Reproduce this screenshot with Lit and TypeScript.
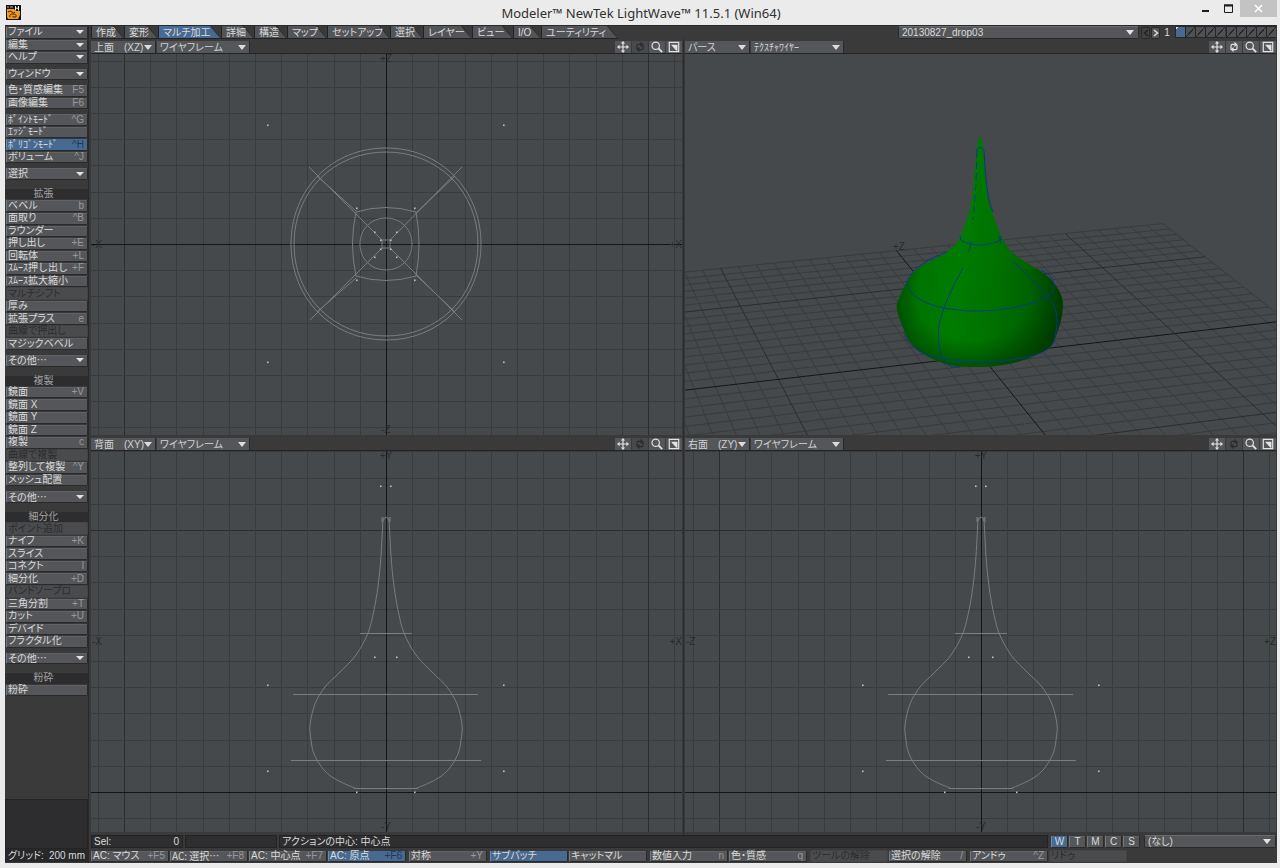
import { LitElement, html, svg, css, nothing } from "lit";
import { customElement, property } from "lit/decorators.js";
import { classMap } from "lit/directives/class-map.js";
import { styleMap } from "lit/directives/style-map.js";

type Pt = [number, number];

interface Tool {
  label: string;
  key?: string;
  menu?: boolean;
  active?: boolean;
  off?: boolean;
}

interface Section {
  title?: string;
  groups: Tool[][];
}

const t = (label: string, key?: string): Tool => ({ label, key });
const menu = (label: string): Tool => ({ label, menu: true });
const off = (label: string): Tool => ({ label, off: true });

const SECTIONS: Section[] = [
  {
    groups: [
      [menu("ファイル"), menu("編集"), menu("ヘルプ")],
      [menu("ウィンドウ")],
      [t("色・質感編集", "F5"), t("画像編集", "F6")],
      [
        t("ﾎﾟｲﾝﾄﾓｰﾄﾞ", "^G"),
        t("ｴｯｼﾞﾓｰﾄﾞ"),
        { label: "ﾎﾟﾘｺﾞﾝﾓｰﾄﾞ", key: "^H", active: true },
        t("ボリューム", "^J"),
      ],
      [menu("選択")],
    ],
  },
  {
    title: "拡張",
    groups: [
      [
        t("ベベル", "b"),
        t("面取り", "^B"),
        t("ラウンダー"),
        t("押し出し", "+E"),
        t("回転体", "+L"),
        t("ｽﾑｰｽ押し出し", "+F"),
        t("ｽﾑｰｽ拡大縮小"),
        off("マルチシフト"),
        t("厚み"),
        t("拡張プラス", "e"),
        off("曲線で押出し"),
        t("マジックベベル"),
      ],
      [menu("その他…")],
    ],
  },
  {
    title: "複製",
    groups: [
      [
        t("鏡面", "+V"),
        t("鏡面 X"),
        t("鏡面 Y"),
        t("鏡面 Z"),
        t("複製", "c"),
        off("曲線で複製"),
        t("整列して複製", "^Y"),
        t("メッシュ配置"),
      ],
      [menu("その他…")],
    ],
  },
  {
    title: "細分化",
    groups: [
      [
        off("ポイント追加"),
        t("ナイフ", "+K"),
        t("スライス"),
        t("コネクト", "l"),
        t("細分化", "+D"),
        off("バンドソープロ"),
        t("三角分割", "+T"),
        t("カット", "+U"),
        t("デバイド"),
        t("フラクタル化"),
      ],
      [menu("その他…")],
    ],
  },
  { title: "粉砕", groups: [[t("粉砕")]] },
];

const TABS: { label: string; width: number; active?: boolean }[] = [
  { label: "作成", width: 33 },
  { label: "変形", width: 34 },
  { label: "マルチ加工", width: 63, active: true },
  { label: "詳細", width: 33 },
  { label: "構造", width: 33 },
  { label: "マップ", width: 40 },
  { label: "セットアップ", width: 63 },
  { label: "選択", width: 33 },
  { label: "レイヤー", width: 49 },
  { label: "ビュー", width: 41 },
  { label: "I/O", width: 28 },
  { label: "ユーティリティ", width: 77 },
];

const ACTIONS: Tool[][] = [
  [
    t("AC: マウス", "+F5"),
    t("AC: 選択…", "+F8"),
    t("AC: 中心点", "+F7"),
    { label: "AC: 原点", key: "+F6", active: true },
  ],
  [t("対称", "+Y")],
  [{ label: "サブパッチ", active: true }, t("キャットマル")],
  [t("数値入力", "n"), t("色・質感", "q")],
  [off("ツールの解除"), t("選択の解除", "/")],
  [t("アンドゥ", "^Z"), off("リドゥ")],
];

const smooth = (pts: Pt[], closed = false): string => {
  const n = pts.length;
  const at = (i: number): Pt =>
    closed ? pts[(i + n) % n] : pts[Math.max(0, Math.min(n - 1, i))];
  let d = `M${pts[0][0]} ${pts[0][1]}`;
  const last = closed ? n : n - 1;
  for (let i = 0; i < last; i++) {
    const [a, b, c, e] = [at(i - 1), at(i), at(i + 1), at(i + 2)];
    const f = (v: number) => v.toFixed(1);
    d += `C${f(b[0] + (c[0] - a[0]) / 6)} ${f(b[1] + (c[1] - a[1]) / 6)} ${f(
      c[0] - (e[0] - b[0]) / 6
    )} ${f(c[1] - (e[1] - b[1]) / 6)} ${c[0]} ${c[1]}`;
  }
  return closed ? d + "Z" : d;
};

const drawStyles = css`
  :host {
    display: block;
    min-height: 0;
    overflow: hidden;
    background: #45494b;
  }
  svg {
    display: block;
    width: 100%;
    height: 100%;
  }
  text {
    font: 10px "Liberation Sans", sans-serif;
    fill: #27292a;
  }
  .minor {
    stroke: #393b3c;
  }
  .major {
    stroke: #2b2c2d;
  }
  .axis {
    stroke: #151516;
  }
  .wire {
    fill: none;
    stroke: #7b7c7c;
    stroke-width: 1;
  }
  .point {
    fill: #c0c0c0;
  }
`;

@customElement("ortho-view")
class OrthoView extends LitElement {
  @property() kind: "top" | "back" | "right" = "top";

  static styles = drawStyles;

  private grid(cx: number, cy: number) {
    const step = 26.2;
    const lines = [];
    for (let i = -40; i <= 80; i++) {
      if (i === 0) continue;
      const cls = i % 10 === 0 ? "major" : "minor";
      const x = Math.round(cx + i * step) + 0.5;
      const y = Math.round(cy + i * step) + 0.5;
      lines.push(svg`<path class=${cls} d="M${x} 0V3000M0 ${y}H4000" />`);
    }
    return svg`${lines}
      <path class="axis" d="M${cx + 0.5} 0V3000M0 ${cy + 0.5}H4000" />`;
  }

  private points(list: Pt[]) {
    return list.map(
      ([x, y]) => svg`<rect class="point" x=${x - 1} y=${y - 0.5} width="1.600" height="1.600" />`
    );
  }

  private mirror(list: Pt[]): Pt[] {
    return list.flatMap(([x, y]): Pt[] => [[-x, y], [x, y]]);
  }

  private topShape() {
    const round = (rx: number, ry: number) => {
      const kx = rx * 0.57;
      const ky = ry * 0.57;
      return `M0 ${-ry}C${kx} ${-ry} ${rx} ${-ky} ${rx} 0S${kx} ${ry} 0 ${ry}S${-rx} ${ky} ${-rx} 0S${-kx} ${-ry} 0 ${-ry}`;
    };
    const dots: Pt[] = [
      [118, -119], [118, 118], [29, -36], [29, 36],
      [11, -12], [11, 13], [5, -4], [5, 5],
    ];
    return svg`
      <path class="wire" d=${round(95, 96)} />
      <path class="wire" d=${round(92, 92)} />
      <path class="wire" d=${round(26, 26)} />
      <path class="wire" d="M-30 -32Q0 -41 30 -32Q36 0 30 32Q0 41 -30 32Q-37 0 -30 -32Z" />
      <path class="wire" d="M-4 -4H4V4H-4Z" />
      <path class="wire" d="M-77 -77L-4 -4M76 -77L4 -4M-76 76L-4 4M76 76L4 4" />
      <path class="wire" d="M-69 -68L-30 -33M69 -68L30 -31M-69 68L-30 34M69 68L30 31" />
      ${this.points(this.mirror(dots))}`;
  }

  private sideShape(base: number, neck: number) {
    const side: Pt[] = [
      [3, -275], [5, -236], [8, -206], [12, -182], [18, -159], [30, -137],
      [47, -119], [61, -105], [71, -88], [76, -67], [75, -52], [73, -41],
      [69, -32], [62, -22], [54, -15], [43, -9], [31, -4],
    ];
    const dots: Pt[] = [
      [5, -306], [neck, -135], [118, -107], [118, -21], [base, 0],
    ];
    return svg`
      <path class="wire" d=${smooth(side)} />
      <path class="wire" d=${smooth(side.map(([x, y]): Pt => [-x, y]))} />
      <path class="wire" d="M-3 -271Q0 -279 3 -271M-4 -275V-270M4 -275V-270" />
      <path class="wire" d="M-26 -158.5H26M-93 -97.5H92M-95 -31.5H95M-32 -3.5H32" />
      ${this.points(this.mirror(dots))}`;
  }

  render() {
    const top = this.kind === "top";
    const cx = this.kind === "right" ? 296 : 295;
    const cy = top ? 190 : 341;
    const across = this.kind === "right" ? ["-Z", "+Z"] : ["-X", "+X"];
    const up = top ? "Z" : "Y";
    return html`<svg role="img" aria-label="viewport">
      <g shape-rendering="crispEdges">${this.grid(cx, cy)}</g>
      <text x="1" y="194">${across[0]}</text>
      <text x="100%" y="194" text-anchor="end">${across[1]}</text>
      <text x=${cx} y="8" text-anchor="middle">+${up}</text>
      <text x=${cx} y="100%" dy="-2" text-anchor="middle">-${up}</text>
      <g transform="translate(${cx} ${cy})">
        ${top
          ? this.topShape()
          : this.kind === "right"
            ? this.sideShape(36, 12)
            : this.sideShape(29, 11)}
      </g>
    </svg>`;
  }
}

const OUTLINE: Pt[] = [
  [295, 83], [298, 91], [300, 116], [304, 146], [315, 179], [328, 199],
  [357, 218], [369, 229], [377, 244], [377, 261], [372, 279], [365, 293],
  [342, 305], [318, 311], [295, 313], [265, 311], [240, 301], [225, 288],
  [217, 271], [212, 256], [213, 247], [222, 228], [235, 213], [262, 198],
  [275, 183], [285, 154], [288, 133], [292, 96], [293, 86],
];

const EDGES: Pt[][] = [
  [[275, 182], [277, 187], [286, 190], [296, 191], [308, 189], [315, 186], [316, 182]],
  [[262, 198], [244, 206], [229, 217], [222, 229], [227, 239], [240, 248], [259, 254], [288, 257], [320, 255], [347, 249], [364, 241], [369, 233], [366, 223], [356, 216]],
  [[219, 279], [223, 287], [236, 298], [255, 304], [295, 308], [325, 306], [350, 301], [365, 293], [370, 283], [372, 266], [369, 252], [363, 243], [342, 221], [327, 207]],
  [[278, 214], [267, 235], [259, 254], [254, 272], [254, 290], [257, 303], [265, 312], [275, 313]],
  [[292, 97], [293, 94], [297, 94], [299, 97]],
  [[299, 97], [301, 124], [304, 146], [308, 158]],
  [[314, 182], [316, 190]],
  [[286, 187], [285, 194], [283, 198]],
];

@customElement("perspective-view")
class PerspectiveView extends LitElement {
  static styles = [
    drawStyles,
    css`
      .edge {
        fill: none;
        stroke: #06388a;
        stroke-width: 1;
      }
      .dashed {
        stroke-dasharray: 7 4;
      }
    `,
  ];

  private project(x: number, z: number): string {
    const w = 1 + 0.00245 * x + 0.01017 * z;
    const px = (22.21 * x + 3.81 * z + 981.4) / w - 685;
    const py = (-1.416 * x - 4.03 * z + 355.9) / w - 54;
    return `${px.toFixed(1)} ${py.toFixed(1)}`;
  }

  private floor() {
    const size = 16;
    const lines = [];
    for (const main of [false, true]) {
      for (let i = -size; i <= size; i++) {
        if ((i % 10 === 0) !== main) continue;
        const cls = i === 0 ? "axis" : main ? "major" : "minor";
        lines.push(svg`<path class=${cls}
          d="M${this.project(i, -size)}L${this.project(i, size)}M${this.project(-size, i)}L${this.project(size, i)}" />`);
      }
    }
    return lines;
  }

  render() {
    const body = smooth(OUTLINE, true);
    return html`<svg role="img" aria-label="perspective viewport">
      <defs>
        <linearGradient id="side" gradientUnits="userSpaceOnUse" x1="212" y1="235" x2="378" y2="250">
          <stop offset="0" stop-color="#006200" />
          <stop offset=".14" stop-color="#007400" />
          <stop offset=".35" stop-color="#007c00" />
          <stop offset=".6" stop-color="#007000" />
          <stop offset=".85" stop-color="#005e00" />
          <stop offset="1" stop-color="#004a00" />
        </linearGradient>
        <radialGradient id="low" gradientUnits="userSpaceOnUse" cx="288" cy="240" r="92" gradientTransform="translate(0 46) scale(1 .81)">
          <stop offset=".62" stop-color="#002800" stop-opacity="0" />
          <stop offset="1" stop-color="#002800" stop-opacity=".5" />
        </radialGradient>
        <clipPath id="lower"><path d="M200 215H390V320H200Z" /></clipPath>
      </defs>
      ${this.floor()}
      <text x="208" y="196">+Z</text>
      <path d=${body} fill="url(#side)" />
      <path d=${body} fill="url(#low)" clip-path="url(#lower)" />
      ${EDGES.map((e) => svg`<path class="edge" d=${smooth(e)} />`)}
      <path class="edge dashed" d="M292 97L291 130L288 166" />
    </svg>`;
  }
}

const ICONS = {
  move: svg`<path d="M7 0L9.500 3H7.700V6.300H11V4.500L14 7L11 9.500V7.700H7.700V11H9.500L7 14L4.500 11H6.300V7.700H3V9.500L0 7L3 4.500V6.300H6.300V3H4.500Z" fill="currentColor" stroke="none" />`,
  spin: svg`<path d="M3.500 10V5.500Q3.500 4 5 4H8M10.500 4.500V8.500Q10.500 10 9 10H6" /><path d="M7.500 1L11 4L7.500 7ZM6.500 7L3 10L6.500 13Z" fill="currentColor" stroke="none" />`,
  zoom: svg`<circle cx="5.500" cy="5.500" r="4.300" /><path d="M8.700 8.700L13 13" stroke-width="2.200" />`,
  full: svg`<path d="M1.500 1.700H12.500V12.500H1.500Z" /><path d="M3.500 4.500H11V11.500H9.800Z" fill="currentColor" stroke="none" />`,
};

@customElement("view-pane")
class ViewPane extends LitElement {
  @property() view = "";
  @property() mode = "";
  @property({ type: Boolean }) rotates = false;

  static styles = css`
    :host {
      display: grid;
      grid-template-rows: 13px minmax(0, 1fr);
      min-width: 0;
      min-height: 0;
    }
    .bar {
      display: flex;
      gap: 1px;
      background: #3a3a3b;
      border-bottom: 1px solid #242425;
      box-sizing: border-box;
    }
    .pick {
      display: grid;
      align-items: center;
      width: 92px;
      background: #545659;
      border-right: 1px solid #28282a;
    }
    .pick.view {
      width: 64px;
    }
    .pick select,
    .pick i {
      grid-area: 1 / 1;
    }
    .pick i {
      justify-self: end;
      margin-right: 3px;
      border: 4px solid transparent;
      border-top: 5px solid #dcdcdc;
      border-bottom: 0;
      pointer-events: none;
    }
    select {
      appearance: none;
      width: 100%;
      height: 12px;
      padding: 1px 0 0 3px;
      border: 0;
      background: none;
      color: #d2d2d2;
      font: 10px/12px "Liberation Sans", "Noto Sans CJK JP", sans-serif;
      font-feature-settings: "palt";
    }
    select.half {
      font-feature-settings: normal;
    }
    .space {
      flex: 1;
    }
    button {
      display: grid;
      place-items: center;
      width: 16px;
      padding: 0;
      border: 0;
      background: #545659;
      color: #e2e2e2;
    }
    button:disabled {
      background: #48494b;
      color: #2b2b2c;
    }
    svg {
      width: 12px;
      height: 12px;
      fill: none;
      stroke: currentColor;
      stroke-width: 1.4;
    }
  `;

  private icon(name: keyof typeof ICONS, disabled = false) {
    return html`<button aria-label=${name} ?disabled=${disabled}>
      <svg viewBox="0 0 14 14">${ICONS[name]}</svg>
    </button>`;
  }

  render() {
    const half = /[\uff61-\uff9f]/.test(this.mode);
    return html`<div class="bar">
        <span class="pick view">
          <select aria-label="view"><option>${this.view}</option></select><i></i>
        </span>
        <span class="pick">
          <select class=${classMap({ half })} aria-label="render mode"><option>${this.mode}</option></select><i></i>
        </span>
        <span class="space"></span>
        ${this.icon("move")} ${this.icon("spin", !this.rotates)}
        ${this.icon("zoom")} ${this.icon("full")}
      </div>
      <slot></slot>`;
  }
}

@customElement("app-root")
class AppRoot extends LitElement {
  static styles = css`
    :host {
      display: grid;
      grid-template-rows: 25px minmax(0, 1fr);
      box-sizing: border-box;
      height: 100vh;
      min-height: 640px;
      padding: 0 3px 5px 5px;
      background: #ebebeb;
      color: #dadada;
      font: 10px/12px "Liberation Sans", "Noto Sans CJK JP", sans-serif;
      font-feature-settings: "palt";
    }
    * {
      box-sizing: border-box;
    }
    button,
    select {
      font: inherit;
      font-feature-settings: inherit;
      color: inherit;
      margin: 0;
    }
    .title {
      display: grid;
      grid-template-columns: 90px 1fr 90px;
      align-items: center;
    }
    .title h1 {
      margin: 0;
      text-align: center;
      color: #303030;
      font: 13px/24px "Noto Sans", sans-serif;
    }
    .logo {
      width: 15px;
      height: 15px;
      margin-left: 1px;
    }
    .window {
      display: flex;
      align-self: start;
      justify-content: flex-end;
      height: 17px;
    }
    .window button {
      width: 23px;
      padding: 0;
      border: 0;
      background: none;
    }
    .window .close {
      width: 37px;
      background: #c3c3c3;
    }
    .window svg {
      display: block;
      margin: auto;
      width: 11px;
      height: 11px;
      fill: none;
      stroke: #1c1c1c;
      stroke-width: 2;
    }
    .window .close svg {
      stroke: #fff;
    }
    .frame {
      display: grid;
      grid-template-columns: 84px minmax(0, 1fr);
      gap: 2px;
      min-height: 0;
      padding-right: 1px;
      background: #3a3a3b;
      border-top: 1px solid #2a2a2b;
    }
    .side {
      display: flex;
      flex-direction: column;
      min-height: 0;
      border-right: 1px solid #29292a;
      padding-bottom: 1px;
    }
    .tools {
      flex: 1;
      display: flex;
      flex-direction: column;
      min-height: 0;
      padding: 0 0 0 1px;
    }
    .tools > * {
      flex: 1055 1 2px;
      min-height: 0;
    }
    .tools > .gap {
      flex-grow: 200;
    }
    .tools > .wide {
      flex-grow: 700;
    }
    .tools > h2 {
      flex-grow: 840;
      margin: 0 0 0 -1px;
      background: #2d2d2f;
      color: #a3a3a3;
      font: inherit;
      line-height: 10px;
      text-align: center;
      padding-right: 6px;
    }
    .tools > .rest {
      flex-grow: 10100;
    }
    .tools > .well {
      flex-grow: 4750;
      background: #2d2d2f;
      border: 1px solid #242425;
      margin-left: -1px;
    }
    .tool {
      display: flex;
      align-items: center;
      justify-content: space-between;
      padding: 0 3px 0 1px;
      border: 1px solid #2a2a2b;
      border-top-color: #38383a;
      border-left-color: #77787a;
      border-radius: 2px;
      background: linear-gradient(#616265 1px, #545659 1px);
      line-height: 10px;
      white-space: nowrap;
      text-align: left;
    }
    .tool .half {
      font-feature-settings: normal;
    }
    .tool .dots {
      font-family: "Noto Sans CJK JP", sans-serif;
    }
    .tool .key {
      color: #98999b;
    }
    .tool.active {
      background: #476a92;
      border-left-color: #6d8bae;
    }
    .tool.active .key {
      color: #1f3857;
    }
    .tool:disabled {
      background: #4a4b4d;
      border-color: #434446;
      color: #2c2c2e;
    }
    .tool.menu::after,
    .drop i {
      content: "";
      border: 4px solid transparent;
      border-top: 4px solid #e4e4e4;
      border-bottom: 0;
    }
    .grid-size {
      display: flex;
      justify-content: space-between;
      height: 13px;
      padding: 1px 3px 0;
      background: #28282a;
    }
    .main {
      display: grid;
      grid-template-rows: 13px minmax(0, 1fr) 14px 13px;
      min-width: 0;
      min-height: 0;
      padding-bottom: 1px;
    }
    .top {
      display: flex;
    }
    .tabs {
      display: flex;
    }
    .tab {
      flex: none;
      padding: 0 0 0 5px;
      border: 0;
      background: #232324;
      clip-path: polygon(0 0, calc(100% - 10px) 0, 100% 100%, 0 100%);
      text-align: left;
      line-height: 11px;
      position: relative;
      isolation: isolate;
      white-space: nowrap;
    }
    .tab::before {
      content: "";
      position: absolute;
      inset: 0 1px 1px 1px;
      z-index: -1;
      background: #525457;
      clip-path: polygon(0 0, calc(100% - 10px) 0, 100% 100%, 0 100%);
    }
    .tab.active::before {
      background: #476a92;
    }
    .space {
      flex: 1;
    }
    .drop {
      display: grid;
      align-items: center;
      border: 1px solid #2a2a2b;
      border-top-color: #6a6b6d;
      border-radius: 2px;
      background: #545659;
    }
    .drop select,
    .drop i {
      grid-area: 1 / 1;
    }
    .drop select {
      appearance: none;
      width: 100%;
      height: 11px;
      padding: 0 3px;
      border: 0;
      background: none;
      line-height: 11px;
    }
    .drop i {
      justify-self: end;
      margin-right: 4px;
      border-top-width: 5px;
      pointer-events: none;
    }
    .object {
      width: 241px;
    }
    .bank {
      display: flex;
      align-items: center;
      gap: 1px;
      padding: 0 4px 0 2px;
    }
    .bank button {
      display: grid;
      place-items: center;
      width: 9px;
      height: 12px;
      padding: 0;
      border: 1px solid #2a2a2b;
      border-radius: 2px;
      background: #545659;
    }
    .bank button:disabled {
      background: #424244;
      color: #222;
    }
    .bank svg {
      width: 6px;
      height: 8px;
      fill: none;
      stroke: currentColor;
      stroke-width: 1.6;
    }
    .bank b {
      width: 8px;
      margin-left: 2px;
      font-weight: normal;
      text-align: center;
    }
    .layers {
      display: flex;
    }
    .layer {
      width: 10px;
      height: 12px;
      padding: 0;
      border: 1px solid #262627;
      border-width: 1px 0 1px 1px;
      background: linear-gradient(to bottom right, #4f5154 46%, #262627 46%, #262627 54%, #4f5154 54%);
    }
    .layer.split {
      margin-left: 1px;
    }
    .layer.active {
      background: linear-gradient(135deg, #dfe6ee 2px, #476a92 2px);
    }
    .views {
      display: grid;
      grid-template: minmax(0, 1fr) minmax(0, 1fr) / minmax(0, 1fr) minmax(0, 1fr);
      gap: 3px;
      padding: 2px 0 3px;
      background: linear-gradient(#2a2a2b, #2a2a2b) center / 1px 100% no-repeat #3a3a3b;
    }
    .status {
      display: flex;
      gap: 2px;
      padding-bottom: 1px;
    }
    .cell {
      display: flex;
      justify-content: space-between;
      width: 92px;
      padding: 0 3px 0 2px;
      background: #2e2e30;
      border: 1px solid #232324;
      line-height: 11px;
    }
    .cell.message {
      flex: 1;
    }
    .maps {
      display: flex;
      gap: 1px;
      padding: 0 2px 0 1px;
    }
    .maps .tool {
      justify-content: center;
      width: 17px;
      padding: 0;
    }
    .weights {
      width: 132px;
    }
    .actions {
      display: flex;
      gap: 3px;
      padding-top: 1px;
    }
    .actions div {
      display: flex;
      gap: 1px;
    }
    .actions .tool {
      width: 78px;
    }
  `;

  private tool(item: Tool) {
    const half = /[\uff61-\uff9f]/.test(item.label);
    const dots = item.label.endsWith("…");
    return html`<button
      class=${classMap({ tool: true, menu: !!item.menu, active: !!item.active })}
      ?disabled=${!!item.off}
    ><span class=${classMap({ half, dots })} lang="ja">${item.label}</span>${item.key
        ? html`<span class="key">${item.key}</span>`
        : nothing}</button>`;
  }

  private section(s: Section) {
    return html`${s.title ? html`<span class="wide"></span><h2>${s.title}</h2>` : nothing}
    ${s.groups.map(
      (g, i) => html`${i ? html`<span class="gap"></span>` : nothing}${g.map((x) => this.tool(x))}`
    )}`;
  }

  private drop(cls: string, label: string, value: string) {
    return html`<span class="drop ${cls}">
      <select aria-label=${label}><option>${value}</option></select><i></i>
    </span>`;
  }

  render() {
    return html`
      <header class="title">
        <svg class="logo" viewBox="0 0 15 15">
          <path d="M0 0H15V15H0Z" fill="#15130f" />
          <path d="M1 4H8L10 6H14V10L12 14H2L1 12Z" fill="#f09a22" />
          <path d="M2 7Q4 5 6 7T9 7M4 12Q3 9 7 9Q11 9 10 12H7V11" fill="none" stroke="#43260a" />
          <path d="M2 1V3M4 2H7" stroke="#b9b0a4" />
          <path d="M9.500 1V5.500M12.500 1V5.500M9 3.200H13" stroke="#f6f6f6" />
        </svg>
        <h1>Modeler™ NewTek LightWave™ 11.5.1 (Win64)</h1>
        <div class="window">
          <button aria-label="minimize"><svg viewBox="0 0 11 11"><path d="M2 8H9" /></svg></button>
          <button aria-label="maximize">
            <svg viewBox="0 0 11 11"><path d="M1 2H10M1.500 2V9.500H9.500V2" stroke-width="1" /><path d="M1 2.500H10" /></svg>
          </button>
          <button class="close" aria-label="close">
            <svg viewBox="0 0 11 11"><path d="M2 2L9 9M9 2L2 9" stroke-width="1.500" /></svg>
          </button>
        </div>
      </header>
      <div class="frame">
        <aside class="side">
          <div class="tools">
            ${SECTIONS.map((s) => this.section(s))}
            <span class="rest"></span>
            <span class="well"></span>
          </div>
          <div class="grid-size"><span>グリッド:</span><span>200 mm</span></div>
        </aside>
        <main class="main">
          <div class="top">
            <nav class="tabs">
              ${TABS.map(
                (x) => html`<button
                  class=${classMap({ tab: true, active: !!x.active })}
                  style=${styleMap({ width: `${x.width}px` })}
                >${x.label}</button>`
              )}
            </nav>
            <span class="space"></span>
            ${this.drop("object", "object", "20130827_drop03")}
            <div class="bank">
              <button aria-label="previous bank" disabled><svg viewBox="0 0 6 8"><path d="M5 1L1.500 4L5 7" /></svg></button>
              <button aria-label="next bank"><svg viewBox="0 0 6 8"><path d="M1 1L4.500 4L1 7" /></svg></button>
              <b>1</b>
            </div>
            <div class="layers">
              ${Array.from({ length: 10 }, (_, i) => html`<button
                class=${classMap({ layer: true, active: i === 0, split: i === 5 })}
                aria-label="layer ${i + 1}"
              ></button>`)}
            </div>
          </div>
          <div class="views">
            <view-pane view="上面　(XZ)" mode="ワイヤフレーム"><ortho-view kind="top"></ortho-view></view-pane>
            <view-pane view="パース" mode="ﾃｸｽﾁｬﾜｲﾔｰ" rotates><perspective-view></perspective-view></view-pane>
            <view-pane view="背面　(XY)" mode="ワイヤフレーム"><ortho-view kind="back"></ortho-view></view-pane>
            <view-pane view="右面　(ZY)" mode="ワイヤフレーム"><ortho-view kind="right"></ortho-view></view-pane>
          </div>
          <div class="status">
            <div class="cell"><span>Sel:</span><span>0</span></div>
            <div class="cell"></div>
            <div class="cell message">アクションの中心: 中心点</div>
            <div class="maps">
              ${["W", "T", "M", "C", "S"].map((m) => this.tool({ label: m, active: m === "W" }))}
            </div>
            ${this.drop("weights", "vertex map", "(なし)")}
          </div>
          <div class="actions">
            ${ACTIONS.map((g) => html`<div>${g.map((x) => this.tool(x))}</div>`)}
          </div>
        </main>
      </div>
    `;
  }
}
